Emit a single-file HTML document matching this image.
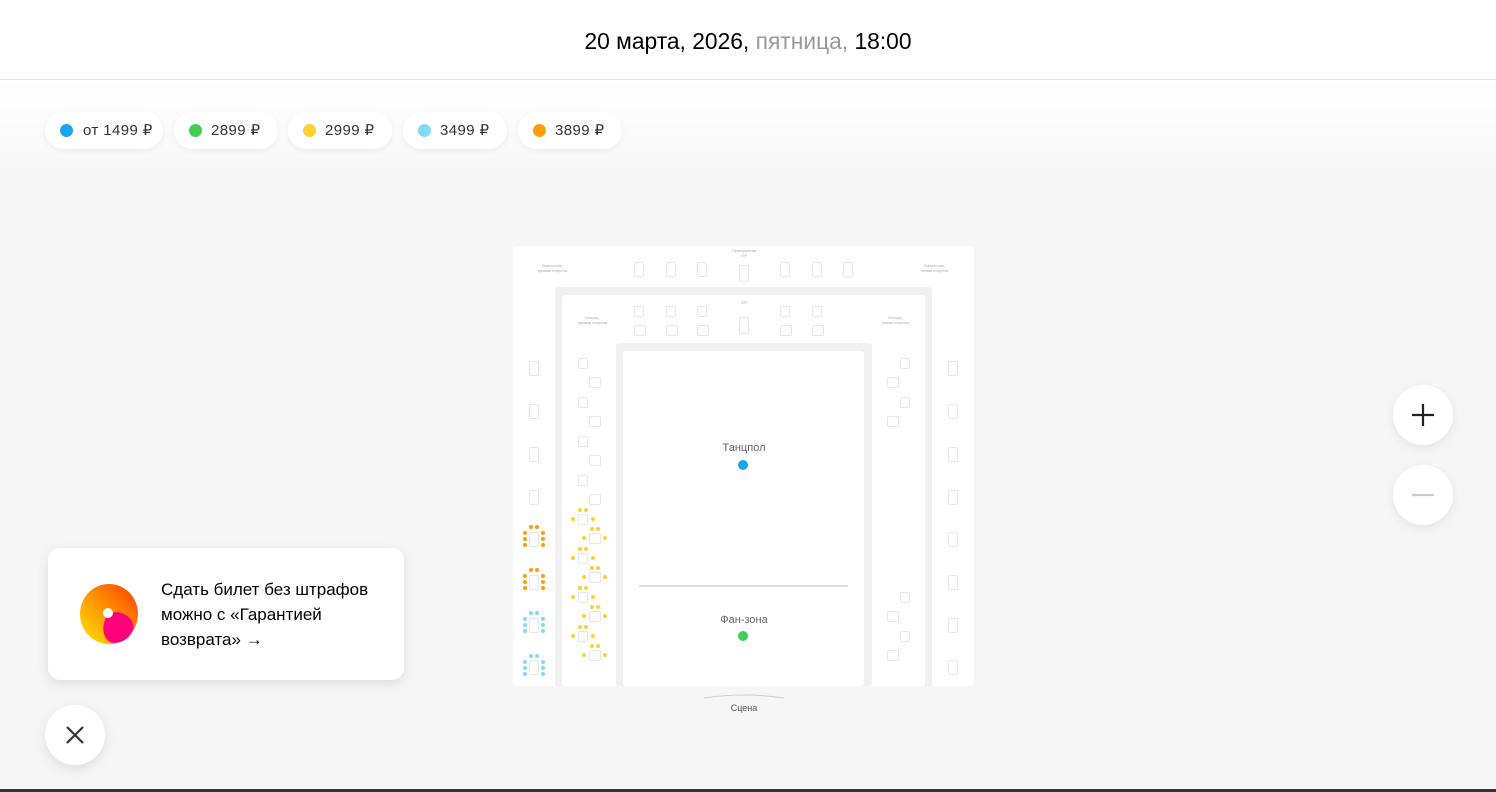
<!DOCTYPE html>
<html><head><meta charset="utf-8"><style>
*{margin:0;padding:0;box-sizing:border-box}
body{width:1496px;height:792px;overflow:hidden;background:#f6f6f6;font-family:"Liberation Sans",sans-serif;position:relative}
.hdr{position:absolute;left:0;top:0;width:1496px;height:80px;background:#fff;border-bottom:1px solid #e4e4e4;text-align:center;font-size:22.8px;line-height:82px;color:#000}
.hdr span{color:#999}
.grad{position:absolute;left:0;top:80px;width:1496px;height:110px;background:linear-gradient(#fff,#f6f6f6)}
.pill{position:absolute;top:112px;height:37px;background:#fff;border-radius:19px;box-shadow:0 2px 6px rgba(0,0,0,.06);font-size:15px;line-height:37px;color:#333;padding-left:38px;letter-spacing:.4px}
.pill i{position:absolute;left:15px;top:12px;width:13px;height:13px;border-radius:50%}
.w{position:absolute;background:#fff}
.g{position:absolute;background:#f0f0f0}
.t{position:absolute;width:10px;height:15px;border:1px solid #e6e6e6;border-radius:2px;background:#fff}
.lbl{position:absolute;font-size:4px;color:#aaa;text-align:center}
.zoom{position:absolute;left:1393px;width:60px;height:60px;border-radius:50%;background:#fff;box-shadow:0 3px 10px rgba(0,0,0,.08)}
.card{position:absolute;left:48px;top:548px;width:356px;height:132px;background:#fff;border-radius:12px;box-shadow:0 4px 12px rgba(0,0,0,.1)}
.card p{position:absolute;left:113px;top:29px;font-size:17px;line-height:25px;color:#000}
.close{position:absolute;left:45px;top:705px;width:60px;height:60px;border-radius:50%;background:#fff;box-shadow:0 4px 12px rgba(0,0,0,.1)}
</style></head><body>
<div class="hdr">20 марта, 2026, <span>пятница,</span> 18:00</div>
<div class="grad"></div>
<div class="pill" style="left:45px;width:118px"><i style="background:#1aa4f0"></i>от 1499 ₽</div>
<div class="pill" style="left:174px;width:104px;padding-left:37px"><i style="background:#3fcf57"></i>2899 ₽</div>
<div class="pill" style="left:288px;width:104px;padding-left:37px"><i style="background:#ffd12e"></i>2999 ₽</div>
<div class="pill" style="left:403px;width:104px;padding-left:37px"><i style="background:#7fdcf7"></i>3499 ₽</div>
<div class="pill" style="left:518px;width:104px;padding-left:37px"><i style="background:#ff9d0a"></i>3899 ₽</div>

<div class="w" style="left:513px;top:246px;width:461px;height:440px;border-radius:4px"></div>
<div class="g" style="left:555px;top:287px;width:377px;height:399px;border-radius:4px"></div>
<div class="w" style="left:562px;top:295px;width:363px;height:391px;border-radius:3px"></div>
<div class="g" style="left:616px;top:343px;width:256px;height:343px;border-radius:3px"></div>
<div class="w" style="left:623px;top:351px;width:241px;height:335px;border-radius:3px"></div>
<div class="g" style="left:555px;top:343px;width:7px;height:343px"></div>
<div class="g" style="left:925px;top:343px;width:7px;height:343px"></div>

<div class="lbl" style="left:530px;top:263px;width:45px">Балкончик,<br>правая сторона</div>
<div class="lbl" style="left:912px;top:263px;width:45px">Балкончик,<br>левая сторона</div>
<div class="lbl" style="left:720px;top:248px;width:48px">Приподнятая<br>VIP</div>
<div class="lbl" style="left:570px;top:315px;width:45px">Бенуар,<br>правая сторона</div>
<div class="lbl" style="left:873px;top:315px;width:45px">Бенуар,<br>левая сторона</div>
<div class="lbl" style="left:735px;top:300px;width:18px">VIP</div>

<div class="t" style="left:634px;top:262px"></div><div class="t" style="left:666px;top:262px"></div><div class="t" style="left:697px;top:262px"></div><div class="t" style="left:739px;top:265px;height:17px"></div>
<div class="t" style="left:780px;top:262px"></div><div class="t" style="left:812px;top:262px"></div><div class="t" style="left:843px;top:262px"></div>
<div class="t" style="left:634px;top:306px;height:11px"></div><div class="t" style="left:666px;top:306px;height:11px"></div><div class="t" style="left:697px;top:306px;height:11px"></div><div class="t" style="left:780px;top:306px;height:11px"></div><div class="t" style="left:812px;top:306px;height:11px"></div>
<div class="t" style="left:634px;top:325px;width:12px;height:11px"></div><div class="t" style="left:666px;top:325px;width:12px;height:11px"></div><div class="t" style="left:697px;top:325px;width:12px;height:11px"></div><div class="t" style="left:739px;top:317px;height:17px"></div><div class="t" style="left:780px;top:325px;width:12px;height:11px"></div><div class="t" style="left:812px;top:325px;width:12px;height:11px"></div>

<div class="t" style="left:529px;top:361px"></div><div class="t" style="left:529px;top:404px"></div><div class="t" style="left:529px;top:447px"></div><div class="t" style="left:529px;top:490px"></div>
<div class="t" style="left:948px;top:361px"></div><div class="t" style="left:948px;top:404px"></div><div class="t" style="left:948px;top:447px"></div><div class="t" style="left:948px;top:490px"></div><div class="t" style="left:948px;top:532px"></div><div class="t" style="left:948px;top:575px"></div><div class="t" style="left:948px;top:618px"></div><div class="t" style="left:948px;top:660px"></div>
<div class="t" style="left:578px;top:358px;height:11px"></div><div class="t" style="left:589px;top:377px;width:12px;height:11px"></div><div class="t" style="left:578px;top:397px;height:11px"></div><div class="t" style="left:589px;top:416px;width:12px;height:11px"></div><div class="t" style="left:578px;top:436px;height:11px"></div><div class="t" style="left:589px;top:455px;width:12px;height:11px"></div><div class="t" style="left:578px;top:475px;height:11px"></div><div class="t" style="left:589px;top:494px;width:12px;height:11px"></div>
<div class="t" style="left:578px;top:514px;height:11px"></div><div class="t" style="left:589px;top:533px;width:12px;height:11px"></div><div class="t" style="left:578px;top:553px;height:11px"></div><div class="t" style="left:589px;top:572px;width:12px;height:11px"></div><div class="t" style="left:578px;top:592px;height:11px"></div><div class="t" style="left:589px;top:611px;width:12px;height:11px"></div><div class="t" style="left:578px;top:631px;height:11px"></div><div class="t" style="left:589px;top:650px;width:12px;height:11px"></div>
<div class="t" style="left:900px;top:358px;height:11px"></div><div class="t" style="left:887px;top:377px;width:12px;height:11px"></div><div class="t" style="left:900px;top:397px;height:11px"></div><div class="t" style="left:887px;top:416px;width:12px;height:11px"></div>
<div class="t" style="left:900px;top:592px;height:11px"></div><div class="t" style="left:887px;top:611px;width:12px;height:11px"></div><div class="t" style="left:900px;top:631px;height:11px"></div><div class="t" style="left:887px;top:650px;width:12px;height:11px"></div>
<div class="t" style="left:529px;top:532px"></div><div class="t" style="left:529px;top:575px"></div><div class="t" style="left:529px;top:618px"></div><div class="t" style="left:529px;top:660px"></div>

<svg style="position:absolute;left:0;top:0" width="1496" height="792">
<g fill="#ff9d0a">
<circle cx="531" cy="527" r="2"/><circle cx="537" cy="527" r="2"/><circle cx="525" cy="533" r="2"/><circle cx="525" cy="539" r="2"/><circle cx="525" cy="545" r="2"/><circle cx="543" cy="533" r="2"/><circle cx="543" cy="539" r="2"/><circle cx="543" cy="545" r="2"/>
<circle cx="531" cy="570" r="2"/><circle cx="537" cy="570" r="2"/><circle cx="525" cy="576" r="2"/><circle cx="525" cy="582" r="2"/><circle cx="525" cy="588" r="2"/><circle cx="543" cy="576" r="2"/><circle cx="543" cy="582" r="2"/><circle cx="543" cy="588" r="2"/></g>
<g fill="#7fdcf7">
<circle cx="531" cy="613" r="2"/><circle cx="537" cy="613" r="2"/><circle cx="525" cy="619" r="2"/><circle cx="525" cy="625" r="2"/><circle cx="525" cy="631" r="2"/><circle cx="543" cy="619" r="2"/><circle cx="543" cy="625" r="2"/><circle cx="543" cy="631" r="2"/>
<circle cx="531" cy="656" r="2"/><circle cx="537" cy="656" r="2"/><circle cx="525" cy="662" r="2"/><circle cx="525" cy="668" r="2"/><circle cx="525" cy="674" r="2"/><circle cx="543" cy="662" r="2"/><circle cx="543" cy="668" r="2"/><circle cx="543" cy="674" r="2"/></g>
<g fill="#ffd12e">
<circle cx="580" cy="510" r="2"/><circle cx="586" cy="510" r="2"/><circle cx="573" cy="519" r="2"/><circle cx="593" cy="519" r="2"/><circle cx="592" cy="529" r="2"/><circle cx="598" cy="529" r="2"/><circle cx="584" cy="538" r="2"/><circle cx="605" cy="538" r="2"/>
<circle cx="580" cy="549" r="2"/><circle cx="586" cy="549" r="2"/><circle cx="573" cy="558" r="2"/><circle cx="593" cy="558" r="2"/><circle cx="592" cy="568" r="2"/><circle cx="598" cy="568" r="2"/><circle cx="584" cy="577" r="2"/><circle cx="605" cy="577" r="2"/>
<circle cx="580" cy="588" r="2"/><circle cx="586" cy="588" r="2"/><circle cx="573" cy="597" r="2"/><circle cx="593" cy="597" r="2"/><circle cx="592" cy="607" r="2"/><circle cx="598" cy="607" r="2"/><circle cx="584" cy="616" r="2"/><circle cx="605" cy="616" r="2"/>
<circle cx="580" cy="627" r="2"/><circle cx="586" cy="627" r="2"/><circle cx="573" cy="636" r="2"/><circle cx="593" cy="636" r="2"/><circle cx="592" cy="646" r="2"/><circle cx="598" cy="646" r="2"/><circle cx="584" cy="655" r="2"/><circle cx="605" cy="655" r="2"/></g>
<line x1="639" y1="586" x2="848" y2="586" stroke="#bbb" stroke-width="1"/>
<circle cx="743" cy="465" r="5" fill="#1aa4f0"/>
<circle cx="743" cy="636" r="5" fill="#3fcf57"/>
<path d="M704 698 Q744 692 784 698" stroke="#ccc" fill="none"/>
<text x="744" y="451" font-size="11" fill="#666" text-anchor="middle" font-family="Liberation Sans">Танцпол</text>
<text x="744" y="623" font-size="11" fill="#666" text-anchor="middle" font-family="Liberation Sans">Фан-зона</text>
<text x="744" y="711" font-size="9" fill="#555" text-anchor="middle" font-family="Liberation Sans">Сцена</text>
</svg>

<div class="zoom" style="top:385px"><svg width="60" height="60"><path d="M30 19V41M19 30H41" stroke="#222" stroke-width="2.2"/></svg></div>
<div class="zoom" style="top:465px"><svg width="60" height="60"><path d="M19 30H41" stroke="#ccc" stroke-width="2.2"/></svg></div>

<div class="card">
<svg style="position:absolute;left:30px;top:35px" width="62" height="62"><defs><linearGradient id="a" x1="0" y1="1" x2="1" y2="0"><stop offset="0" stop-color="#ffe600"/><stop offset=".55" stop-color="#ff8a00"/><stop offset="1" stop-color="#ff3d00"/></linearGradient></defs>
<ellipse cx="31" cy="31" rx="29" ry="30" fill="url(#a)"/>
<path d="M30 31 C44 25 58 36 55 47 C51 58 38 62 32 59 C24 54 23 42 30 31Z" fill="#ff007a"/>
<circle cx="30" cy="30" r="5" fill="#fff"/></svg>
<p>Сдать билет без штрафов<br>можно с «Гарантией<br>возврата» →</p></div>
<div class="close"><svg width="60" height="60"><path d="M22 22L38 38M38 22L22 38" stroke="#333" stroke-width="2.2"/></svg></div>
<div style="position:absolute;left:0;top:789px;width:1496px;height:3px;background:#333"></div>
</body></html>
